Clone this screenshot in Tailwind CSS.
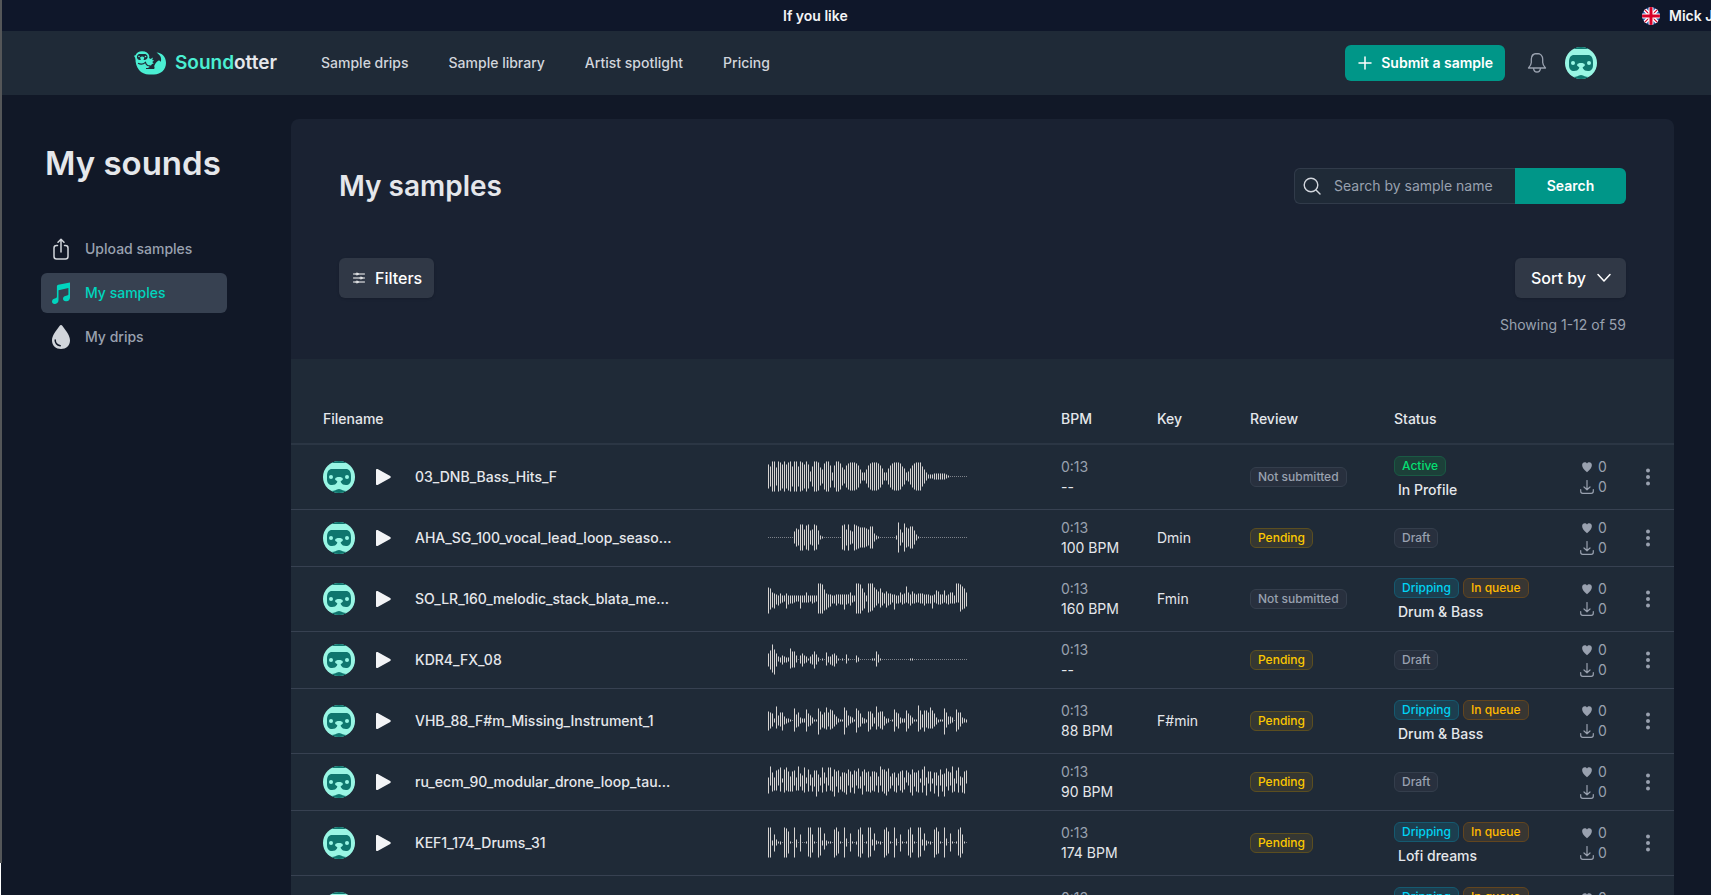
<!DOCTYPE html>
<html lang="en">
<head>
    <meta charset="UTF-8">
    <meta name="viewport" content="width=device-width, initial-scale=1.0">
    <title>Soundotter - My samples</title>
    <script src="https://cdn.jsdelivr.net/npm/@tailwindcss/browser@4"></script>
</head>
<body class="flex h-screen overflow-hidden bg-[#111827] font-['Inter',sans-serif] text-sm text-gray-200">
    <!-- Shared icons -->
    <svg class="hidden">
        <symbol id="avatar" viewBox="0 0 32 32">
            <rect width="32" height="32" fill="#99f6e4"/>
            <path d="M0 0h32v2H0z" fill="#0f766e"/>
            <path d="M9 8h14c3 0 5 2.500 5 7v3c0 4-2 6-5 6-2.500 0-4-.8-5-2.500-.6-1-.4-1.500.8-2 2-1 1.400-3.500-2.800-3.500s-4.800 2.500-2.800 3.500c1.200.5 1.400 1 .8 2-1 1.700-2.500 2.500-5 2.500-3 0-5-2-5-6v-3c0-4.500 2-7 5-7z" fill="#0f766e"/>
            <circle cx="8" cy="16" r="2" fill="#99f6e4"/>
            <circle cx="24" cy="16" r="2" fill="#99f6e4"/>
            <path d="M6 30c3.500 0 6-.4 8-1.600q2-1 4 0c2 1.200 4.500 1.600 8 1.600v2H6z" fill="#0f766e"/>
        </symbol>
        <symbol id="play" viewBox="0 0 16 18">
            <path d="M1 2v14c0 .9.800 1.300 1.600.9l12.600-7c.8-.4.800-1.400 0-1.800L2.600 1.100C1.800.7 1 1.100 1 2z" fill="#f3f4f6"/>
        </symbol>
        <symbol id="heart" viewBox="0 0 16 16">
            <path d="M8 15C3.500 11.500 1.500 8.500 1.500 5.300 1.500 3 3 1.500 5 1.500c1.300 0 2.400.7 3 1.800.6-1.100 1.700-1.800 3-1.800 2 0 3.500 1.500 3.500 3.800C14.500 8.500 12.500 11.500 8 15z" fill="currentColor"/>
        </symbol>
        <symbol id="download" viewBox="0 0 14 14">
            <path d="M7 .5v9M4 7l3 2.800L10 7M.7 9.500v1.800q0 2 2 2h8.600q2 0 2-2V9.500" fill="none" stroke="currentColor" stroke-width="1.200" stroke-linecap="round" stroke-linejoin="round"/>
        </symbol>
        <symbol id="dots" viewBox="0 0 6 18">
            <g fill="currentColor"><circle cx="3" cy="2.500" r="2"/><circle cx="3" cy="9" r="2"/><circle cx="3" cy="15.500" r="2"/></g>
        </symbol>
    </svg>

    <!-- Window edge -->
    <div class="flex w-[2px] shrink-0 flex-col">
        <div class="flex-1 bg-[#545658]"></div>
        <div class="h-8 w-px bg-white"></div>
    </div>

    <div class="min-w-0 flex-1">
        <!-- Announcement ticker -->
        <div class="flex h-[31px] items-center overflow-hidden bg-[#0f172a] pl-[781px] font-semibold whitespace-nowrap text-gray-100">
            <span>If you like</span>
            <div class="ml-auto flex w-[69px] items-center gap-[9px] overflow-hidden">
                <svg class="size-[18px] shrink-0 rounded-full" viewBox="0 0 18 18">
                    <rect width="18" height="18" fill="#2553a4"/>
                    <path d="M0 0l18 18M18 0L0 18" stroke="#fff" stroke-width="4"/>
                    <path d="M0 0l18 18M18 0L0 18" stroke="#d80027" stroke-width="1.200"/>
                    <path d="M9 0v18M0 9h18" stroke="#fff" stroke-width="5"/>
                    <path d="M9 0v18M0 9h18" stroke="#d80027" stroke-width="3"/>
                </svg>
                <span>Mick J</span>
            </div>
        </div>

        <!-- Navbar -->
        <header class="flex h-16 items-center bg-[#1f2a37] pr-[114px] pl-[132px]">
            <a href="#" class="flex items-center gap-[9px] text-[19px] font-semibold text-gray-200">
                <svg class="h-6 w-8" viewBox="0 0 32 24">
                    <path d="M1.500 7C1 17 7 23.500 15 23.500h5c7 0 12-5 12-11.500C32 6 28 1.800 22.500 1.500c3.700 2.300 5.500 5.500 4.300 9.500-.8-1.600-2.300-2-3.300-.8-1 1-2.500 2.300-3.300 4.800l.5 2.500h-8l3-1.500-2.200-2 3.500.5 1-1.500 1.800-.5-1.600-1.500 2-1.500-2-.5.8-2.500-2.500 1.500-1.500-1z" fill="#4aeed2"/>
                    <path d="M0 4.800l1.500-.5C2.500 1.500 5 .3 8 .3c4 0 6.500 1.700 7.300 4.700l-.3 3.500c-1.500 2.500-4 3.500-7 3.500S2 10.500 1.500 7.500z" fill="#4aeed2"/>
                    <path d="M5 3h6.500Q14 4 13.500 7q-1.500 2.500-3.500 2H6.500Q4 9.500 3 7 2.500 4 5 3z" fill="#1f2a37"/>
                    <path d="M6 6.500q2.200-2 4.400 0L9.500 9h-2.600z" fill="#4aeed2"/>
                    <circle cx="5" cy="5.500" r=".8" fill="#4aeed2"/>
                    <circle cx="11.500" cy="5.500" r=".8" fill="#4aeed2"/>
                    <path d="M4 12.300c2.500 1.200 5.500.8 7.500-1 .3 2.200 1.200 3.200 3 3.700M12 17.500h8" fill="none" stroke="#1f2a37" stroke-width="1.100"/>
                </svg>
                <span><span class="text-[#4aeed2]">Sound</span>otter</span>
            </a>
            <nav class="ml-11 flex gap-10 font-medium text-gray-300">
                <a href="#">Sample drips</a>
                <a href="#">Sample library</a>
                <a href="#">Artist spotlight</a>
                <a href="#">Pricing</a>
            </nav>
            <button class="ml-auto flex h-9 items-center gap-2 rounded-md bg-[#009688] px-3 font-semibold text-white">
                <svg class="size-4" viewBox="0 0 16 16"><path d="M8 2v12M2 8h12" stroke="currentColor" stroke-width="1.500" stroke-linecap="round"/></svg>
                Submit a sample
            </button>
            <button class="ml-[22px] text-gray-400" aria-label="Notifications">
                <svg class="h-[22px] w-5" viewBox="0 0 20 22" fill="none" stroke="currentColor" stroke-width="1.300" stroke-linejoin="round">
                    <path d="M10 1.500c-3.700 0-5.700 2.600-5.700 5.800v3.200c0 2-.8 3.200-2.800 5.500h17c-2-2.300-2.800-3.500-2.800-5.500V7.300c0-3.200-2-5.800-5.700-5.800zM6.500 16.300c.3 2.400 1.600 3.700 3.500 3.700s3.200-1.300 3.500-3.700"/>
                </svg>
            </button>
            <button class="ml-[18px]" aria-label="Account"><svg class="size-8 rounded-full"><use href="#avatar"/></svg></button>
        </header>

        <div class="flex items-start pr-[37px]">
            <!-- Sidebar -->
            <aside class="w-[289px] shrink-0 pt-12 pr-16 pl-[39px]">
                <h1 class="pl-1 text-[33px] leading-10 font-semibold whitespace-nowrap">My sounds</h1>
                <nav class="mt-[46px] flex flex-col gap-1 font-medium text-gray-400">
                    <a href="#" class="flex h-10 items-center gap-3 rounded-md px-2">
                        <svg class="size-6" viewBox="0 0 24 24" fill="none" stroke="#d1d5db" stroke-width="1.500" stroke-linecap="round" stroke-linejoin="round">
                            <path d="M8.500 8.500h-1Q5 8.500 5 11v8.500Q5 22 7.500 22h9q2.500 0 2.500-2.500V11q0-2.500-2.500-2.500h-1M12 15V2.500M9 5.300l3-3 3 3"/>
                        </svg>
                        Upload samples
                    </a>
                    <a href="#" class="flex h-10 items-center gap-3 rounded-md bg-[#374151] px-2 text-[#00d5be]">
                        <svg class="size-6" viewBox="0 0 24 24" fill="currentColor">
                            <path d="M21 1.500v15c0 2.300-1.500 3.500-3.500 3.800-2 .3-3.500-.8-3.500-2.500 0-2 1.500-2.800 4-3.300 1-.2 1.400-.5 1.400-1.500V7L9.500 9.300v10c0 2.300-1.500 3.400-3.300 3.700-2 .3-3.200-.8-3.200-2.500 0-1.900 1.500-2.800 3.500-3.300 1-.2 1.400-.6 1.400-1.600V5.500c0-.9.400-1.400 1.400-1.700z"/>
                        </svg>
                        My samples
                    </a>
                    <a href="#" class="flex h-10 items-center gap-3 rounded-md px-2">
                        <svg class="size-6" viewBox="0 0 24 24">
                            <path d="M12 0c.6 0 1 .3 1.500 1C18 7 21 11 21 15.500c0 5-4 8.500-9 8.500s-9-3.500-9-8.500C3 11 6 7 10.500 1c.5-.7.9-1 1.500-1z" fill="#d1d5db"/>
                            <path d="M6.200 15c0 3 2 5.200 5 5.700" fill="none" stroke="#111827" stroke-width="1.500" stroke-linecap="round"/>
                        </svg>
                        My drips
                    </a>
                </nav>
            </aside>

            <!-- Samples -->
            <main class="mt-6 min-w-0 flex-1 overflow-hidden rounded-t-lg bg-[#1a2232]">
                <div class="h-60 px-12 pt-[49px]">
                    <div class="flex h-9 items-center justify-between">
                        <h2 class="text-[28px] leading-8 font-semibold">My samples</h2>
                        <form class="flex h-9 w-[332px]">
                            <label for="search" class="flex w-10 shrink-0 items-center rounded-l-md border border-r-0 border-[#313b4a] bg-[#1f2a37] pl-2 text-gray-300">
                                <svg class="size-[18px]" viewBox="0 0 18 18" fill="none" stroke="currentColor" stroke-width="1.400" stroke-linecap="round"><circle cx="8" cy="8" r="6.800"/><path d="M13 13l4 4"/></svg>
                            </label>
                            <input id="search" type="text" placeholder="Search by sample name" aria-label="Search by sample name" class="min-w-0 flex-1 border-y border-[#313b4a] bg-[#1f2a37] placeholder:text-gray-400">
                            <button type="button" class="w-[111px] shrink-0 rounded-r-md bg-[#009688] font-semibold text-white">Search</button>
                        </form>
                    </div>
                    <div class="mt-[54px] flex items-center justify-between text-base font-medium text-white">
                        <button class="flex h-10 items-center gap-2 rounded-md bg-[#303846] px-3 shadow-sm">
                            <svg class="size-4" viewBox="0 0 16 16" fill="none" stroke="currentColor" stroke-linecap="round">
                                <path d="M2.500 4h11M2.500 8h11M2.500 12h11"/><g fill="#303846"><circle cx="6" cy="4" r="1"/><circle cx="10" cy="8" r="1"/><circle cx="6" cy="12" r="1"/></g>
                            </svg>
                            Filters
                        </button>
                        <button class="flex h-10 items-center gap-2 rounded-md bg-[#303846] px-4 shadow-sm">
                            Sort by
                            <svg class="-mr-1 size-5" viewBox="0 0 20 20"><path d="M4 6.500l6 6.500 6-6.500" fill="none" stroke="currentColor" stroke-width="1.500" stroke-linecap="round" stroke-linejoin="round"/></svg>
                        </button>
                    </div>
                    <p class="mt-[17px] text-right text-gray-400">Showing 1-12 of 59</p>
                </div>

                <table class="w-full table-fixed bg-[#1f2a37] text-left">
                    <colgroup>
                        <col>
                        <col class="w-[293px]">
                        <col class="w-[96px]">
                        <col class="w-[93px]">
                        <col class="w-[144px]">
                        <col class="w-[186px]">
                        <col class="w-[65px]">
                        <col class="w-[29px]">
                    </colgroup>
                    <thead>
                        <tr class="h-[85px] border-b-2 border-[#2b3644] align-bottom">
                            <th class="pb-[14px] pl-8 font-medium">Filename</th>
                            <th></th>
                            <th class="pb-[14px] font-medium">BPM</th>
                            <th class="pb-[14px] font-medium">Key</th>
                            <th class="pb-[14px] font-medium">Review</th>
                            <th class="pb-[14px] font-medium">Status</th>
                            <th></th>
                            <th></th>
                        </tr>
                    </thead>
                    <tbody id="samplesTable"></tbody>
                </table>
            </main>
        </div>
    </div>

    <script>
        // Peaks are one hex digit per bar: above the centre line, then below it
        const samples = [
            {
                name: '03_DNB_Bass_Hits_F', bpm: '--', key: '', review: 'Not submitted', status: ['Active'], drip: 'In Profile',
                up: 'caff9fecfcefaffafecfc5affe97dffb4bffd97bdeeedb7447bdeeedb8448bdeeeda8458bdeeea7422233333321'
            },
            {
                name: 'AHA_SG_100_vocal_lead_loop_seaso...', bpm: '100 BPM', key: 'Dmin', review: 'Pending', status: ['Draft'],
                up: '0000000000000698dd8cd78dc721000000000cd8d76dcbaaa98bb421000000002f85ea9bb731'
            },
            {
                name: 'SO_LR_160_melodic_stack_blata_me...', bpm: '160 BPM', key: 'Fmin', review: 'Not submitted', status: ['Dripping', 'In queue'], drip: 'Drum & Bass',
                up: 'ba65435335333333333633333ffe9544334444444633ffea63fffb97a657554433645c647545554443348744834663ffeca6',
                down: 'fb9a67543a655433a44443543fffcb98557566b65743fffca3edc9759759764b554654575544557555a4566545655544dba875'
            },
            {
                name: 'KDR4_FX_08', bpm: '--', key: '', review: 'Pending', status: ['Draft'],
                up: '69fa6324322b884046431358520107335641010510004200000011851000000000000001100',
                down: '7adf72353329883047431459520106356741010410003200000011731000000000000001100'
            },
            {
                name: 'VHB_88_F#m_Missing_Instrument_1', bpm: '88 BPM', key: 'F#min', review: 'Pending', status: ['Dripping', 'In queue'], drip: 'Drum & Bass',
                up: '9872e58842210c68322b75311c968d8ba64211da5431ca73219973e89942201b87322a75311fa6aa8da73111c84430b88321',
                down: 'a862856a43210b76322b65311e978969864211e75321c76332b963968953201b68322b85311b97b788864211e74320b96322'
            },
            {
                name: 'ru_ecm_90_modular_drone_loop_tau...', bpm: '90 BPM', key: '', review: 'Pending', status: ['Draft'],
                up: '4f94bce3cea5ab4f86e4c74bb74e94ee5cab5998ca7bad5ac9a5aa95fccad58948ab4b97c99b3cf4aa3996c78da9f3be54ab',
                down: 'c4a994a1b9aaa49959b2a4a5fa4b2a49af5b8abd4b6c477d4aab9a4b4acea74ab49b814be5ab1b4e2a2c4f4af594ba2b4bc2b'
            },
            {
                name: 'KEF1_174_Drums_31', bpm: '174 BPM', key: '', review: 'Pending', status: ['Dripping', 'In queue'], drip: 'Lofi dreams',
                up: 'ff283110feb10f308001ff810ff292110dfb10f409101df801ff392110dfb10f408101df810ff392110dfb10f409101df810',
                down: 'ff393120ffb10f509001efa10fd373110fdb10f409102efb01fe382120fdb10f309101dfa10fe383120fcb10f309101dfb10'
            },
            {
                name: 'SO_DB_174_bass_loop_05', bpm: '174 BPM', key: '', review: 'Pending', status: ['Dripping', 'In queue'], drip: 'Drum & Bass',
                up: '5456345645364536453645634564536453645634563456345634563456345634563456345634a5634563456a345634a5634'
            }
        ];

        const badgeStyles = {
            'Active': 'border-[#1a5a44] bg-[#1c4039] text-[#05df72]',
            'Draft': 'border-[#343e4c] bg-[#28303e] text-gray-400',
            'Not submitted': 'border-[#343e4c] bg-[#28303e] text-gray-400',
            'Pending': 'border-[#5b4e20] bg-[#353732] text-[#fcc800]',
            'Dripping': 'border-[#155a70] bg-[#1c3e4f] text-[#00d3f3]',
            'In queue': 'border-[#62451f] bg-[#383632] text-[#ffb900]'
        };

        function badge(label) {
            return `<span class="inline-flex h-5 items-center rounded-md border px-[7px] text-xs font-medium ${badgeStyles[label]}">${label}</span>`;
        }

        function waveform(up, down) {
            let bars = '';
            for (let i = 0; i < 100; i++) {
                const u = parseInt(up[i] || '0', 16);
                const d = parseInt(down[i] || '0', 16);
                if (u + d === 0) {
                    bars += `<rect x="${i * 2}" y="15" width="1" height="1" fill="#7d828a"/>`;
                } else {
                    bars += `<rect x="${i * 2}" y="${15 - u}" width="1" height="${u + d + 1}" fill="#7d828a"/>`;
                    bars += `<rect x="${i * 2}" y="${16 - u}" width="1" height="${Math.max(u + d - 1, 1)}" fill="#d6d3d1"/>`;
                }
            }
            return `<svg class="h-[31px] w-[200px]" viewBox="0 0 200 31" shape-rendering="crispEdges">${bars}</svg>`;
        }

        const tbody = document.getElementById('samplesTable');
        samples.forEach(sample => {
            const row = tbody.insertRow();
            row.className = (sample.drip ? 'h-[65px]' : 'h-[57px]') + ' border-b border-[#374151]';
            row.innerHTML = `
                <td class="pl-8">
                    <div class="flex items-center">
                        <svg class="size-8 shrink-0 rounded-full"><use href="#avatar"/></svg>
                        <button class="ml-5" aria-label="Play"><svg class="h-[18px] w-4"><use href="#play"/></svg></button>
                        <span class="ml-6 truncate font-medium">${sample.name}</span>
                    </div>
                </td>
                <td>${waveform(sample.up, sample.down || sample.up)}</td>
                <td><div class="text-gray-400">0:13</div><div>${sample.bpm}</div></td>
                <td>${sample.key}</td>
                <td><div class="flex">${badge(sample.review)}</div></td>
                <td class="${sample.drip ? 'pt-[3px]' : ''}">
                    <div class="flex gap-1">${sample.status.map(badge).join('')}</div>
                    ${sample.drip ? `<div class="mt-1 pl-1 font-medium">${sample.drip}</div>` : ''}
                </td>
                <td class="text-gray-400">
                    <div class="flex items-center gap-1"><svg class="mx-px size-3"><use href="#heart"/></svg>0</div>
                    <div class="flex items-center gap-1"><svg class="size-[14px]"><use href="#download"/></svg>0</div>
                </td>
                <td class="text-gray-400"><button class="block" aria-label="More"><svg class="h-[18px] w-[6px]"><use href="#dots"/></svg></button></td>
            `;
        });
    </script>
</body>
</html>
